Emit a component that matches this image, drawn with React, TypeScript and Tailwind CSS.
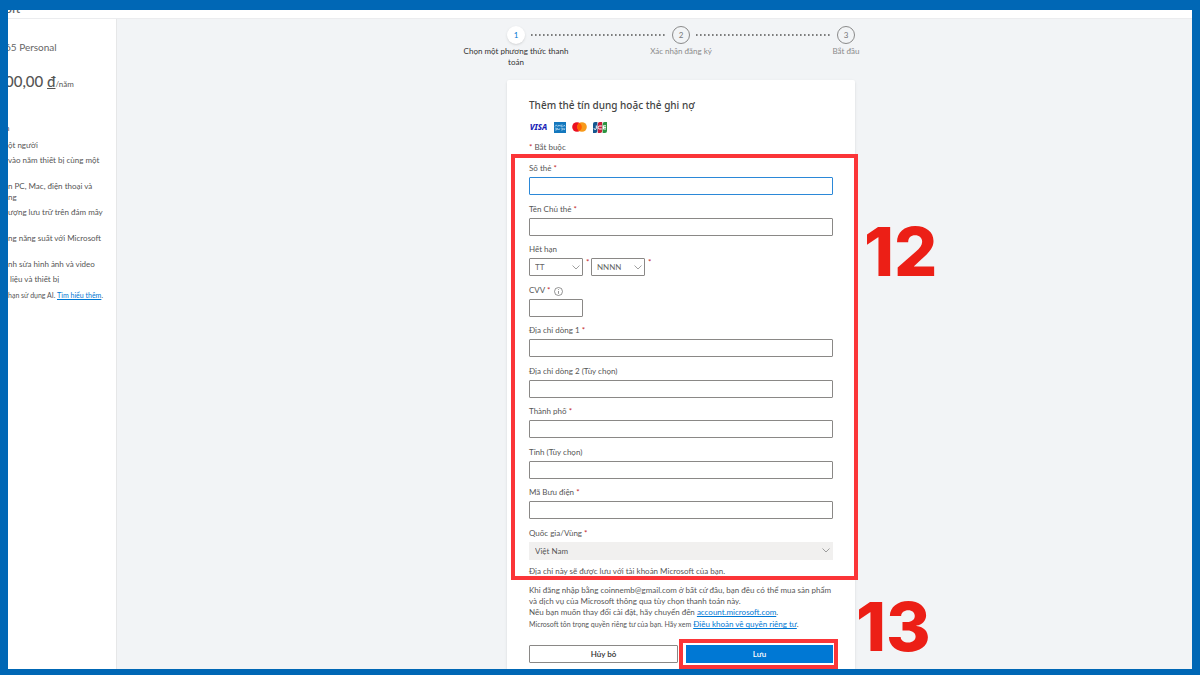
import type { ReactNode } from "react";

interface Step {
  number: number;
  label: string;
  active?: boolean;
}

const steps: Step[] = [
  { number: 1, label: "Chọn một phương thức thanh toán", active: true },
  { number: 2, label: "Xác nhận đăng ký" },
  { number: 3, label: "Bắt đầu" },
];

interface Benefit {
  lines: string[];
  className: string;
}

const benefits: Benefit[] = [
  { lines: ["ột người"], className: "h-[15px]" },
  { lines: ["vào năm thiết bị cùng một"], className: "h-[26px]" },
  { lines: ["n PC, Mac, điện thoại và", "ng"], className: "h-[26px]" },
  { lines: ["ượng lưu trữ trên đám mây"], className: "h-[26px]" },
  { lines: ["ng năng suất với Microsoft"], className: "h-[26px]" },
  { lines: ["nh sửa hình ảnh và video"], className: "h-[15px]" },
  { lines: ["liệu và thiết bị"], className: "h-[15px] pl-[2px]" },
];

function Required() {
  return <span className="text-[#c4262c]">*</span>;
}

function Chevron() {
  return (
    <svg viewBox="0 0 8 5" className="pointer-events-none col-start-1 row-start-1 mr-[3px] h-[5px] w-2 justify-self-end self-center" fill="none" stroke="#888" strokeWidth="0.8">
      <path d="M0.5 0.5 4 4 7.5 0.5" />
    </svg>
  );
}

function Connector() {
  return (
    <svg className="-mx-[43px] mt-2 h-[2px] w-[135px] shrink-0" aria-hidden="true">
      <line x1="0" y1="1" x2="100%" y2="1" stroke="#555" strokeWidth="1.5" strokeDasharray="1.6 2.4" />
    </svg>
  );
}

function Stepper() {
  return (
    <ol className="flex justify-center">
      {steps.map((step, i) => (
        <li key={step.number} className="flex">
          {i > 0 && <Connector />}
          <div className="flex w-[116px] flex-col items-center text-center">
            <span
              className={
                step.active
                  ? "flex size-[18px] items-center justify-center rounded-full bg-white text-[8px] text-[#0078d4] shadow"
                  : "flex size-[18px] items-center justify-center rounded-full border border-[#8a8a8a] text-[8px] text-[#777]"
              }
            >
              {step.number}
            </span>
            <span className={step.active ? "mt-[2px] leading-[11px] text-[#333]" : "mt-[2px] leading-[11px] text-[#8a8a8a]"}>
              {step.label}
            </span>
          </div>
        </li>
      ))}
    </ol>
  );
}

function CardLogos() {
  return (
    <div className="flex h-3 items-center gap-[6px]">
      <span className="w-[19px] text-center font-['Noto_Sans'] text-[8px] font-extrabold italic text-[#1a1fb8]">VISA</span>
      <svg viewBox="0 0 12 11" className="h-[11px] w-3" role="img" aria-label="American Express">
        <rect width="12" height="11" fill="#1478be" />
        <path d="M1 4.6 2.2 2.8 3.4 4.6M4.2 4.6V2.9L5.2 4 6.2 2.9V4.6M8.8 3H7.3V4.5H8.8M9.5 3 11 4.5M11 3 9.5 4.5M1 6.2H2.6V8H1M3.4 8V6.2L5 8 6 6.2M7 6.2H8.6V8H7M9.4 6.2 11 8M11 6.2 9.4 8" stroke="#cfe8f7" strokeWidth="0.6" fill="none" />
      </svg>
      <svg viewBox="0 0 15 10" className="h-[10px] w-[15px]" role="img" aria-label="Mastercard">
        <circle cx="5" cy="5" r="4.8" fill="#eb1020" />
        <circle cx="10" cy="5" r="4.8" fill="#f79a1b" />
        <path d="M7.5 0.9a4.8 4.8 0 0 1 0 8.2 4.8 4.8 0 0 1 0-8.2" fill="#ff5f00" />
      </svg>
      <svg viewBox="0 0 14 11" className="h-[11px] w-[14px]" role="img" aria-label="JCB">
        <path d="M2 0H4.4V9a2 2 0 0 1-2 2H0V2a2 2 0 0 1 2-2" fill="#14568f" />
        <path d="M6.8 0H9.2V9a2 2 0 0 1-2 2H4.8V2a2 2 0 0 1 2-2" fill="#c8203c" />
        <path d="M11.6 0H14V9a2 2 0 0 1-2 2H9.6V2a2 2 0 0 1 2-2" fill="#2c9440" />
        <path d="M3.3 3.5V6.3a1 1 0 0 1-2.3 0M8.8 4H6.6a1.4 1.4 0 0 0 0 3H8.8M10.2 3.8H13M10.2 5.4H13M10.2 7H13M10.4 3.8V7" stroke="#fff" strokeWidth="1" fill="none" />
      </svg>
    </div>
  );
}

interface FieldProps {
  id: string;
  label: string;
  required?: boolean;
  focused?: boolean;
}

function Field({ id, label, required, focused }: FieldProps) {
  return (
    <div>
      <label htmlFor={id} className="block h-[15px] leading-[13px]">
        {label} {required && <Required />}
      </label>
      <input
        id={id}
        type="text"
        className={
          focused
            ? "block h-[18px] w-full rounded-[1px] border border-[#2b88d8] bg-white px-1 outline-none"
            : "block h-[18px] w-full rounded-[1px] border border-[#8a8886] bg-white px-1 outline-none"
        }
      />
    </div>
  );
}

function ExpirySelect({ label, placeholder }: { label: string; placeholder: string }) {
  return (
    <div className="flex">
      <div className="grid">
        <select
          aria-label={label}
          className="col-start-1 row-start-1 h-[18px] w-[54px] appearance-none rounded-[1px] border border-[#8a8886] bg-white pl-[5px] text-[#666]"
        >
          <option>{placeholder}</option>
        </select>
        <Chevron />
      </div>
      <span className="w-2 pl-[3px] leading-[8px]">
        <Required />
      </span>
    </div>
  );
}

function Link({ href, children }: { href: string; children: ReactNode }) {
  return (
    <a href={href} className="text-[#0078d4] underline">
      {children}
    </a>
  );
}

function PaymentCard() {
  return (
    <form className="mt-3 w-[348px] rounded-[2px] bg-white px-[22px] pt-[18px] pb-4 shadow">
      <h1 className="font-['Noto_Sans'] text-[10px] leading-[14px] font-medium text-[#444]">Thêm thẻ tín dụng hoặc thẻ ghi nợ</h1>
      <div className="mt-[9px]">
        <CardLogos />
      </div>
      <p className="mt-2 leading-[13px]">
        <Required /> Bắt buộc
      </p>

      <div className="relative mt-2">
        <div className="flex min-h-[398px] flex-col justify-between">
          <Field id="card-number" label="Số thẻ" required focused />
          <Field id="card-holder" label="Tên Chủ thẻ" required />
          <fieldset>
            <legend className="h-[15px] leading-[13px]">Hết hạn</legend>
            <div className="flex">
              <ExpirySelect label="Tháng hết hạn" placeholder="TT" />
              <ExpirySelect label="Năm hết hạn" placeholder="NNNN" />
            </div>
          </fieldset>
          <div>
            <div className="flex h-[15px] gap-1 leading-[13px]">
              <label htmlFor="cvv">
                CVV <Required />
              </label>
              <svg viewBox="0 0 9 9" className="mt-[3px] size-[9px]" fill="none" stroke="#666" strokeWidth="0.7">
                <circle cx="4.5" cy="4.5" r="4" />
                <path d="M4.5 4V6.8M4.5 2.2V3" />
              </svg>
            </div>
            <input id="cvv" type="text" className="block h-[18px] w-[54px] rounded-[1px] border border-[#8a8886] bg-white px-1" />
          </div>
          <Field id="address-1" label="Địa chỉ dòng 1" required />
          <Field id="address-2" label="Địa chỉ dòng 2 (Tùy chọn)" />
          <Field id="city" label="Thành phố" required />
          <Field id="province" label="Tỉnh (Tùy chọn)" />
          <Field id="postcode" label="Mã Bưu điện" required />
          <div>
            <label htmlFor="country" className="block h-[15px] leading-[13px]">
              Quốc gia/Vùng <Required />
            </label>
            <div className="grid">
              <select id="country" className="col-start-1 row-start-1 h-[18px] w-full appearance-none bg-[#f1f0ef] pl-[6px]">
                <option>Việt Nam</option>
              </select>
              <Chevron />
            </div>
          </div>
        </div>
        <p className="mt-[6px] leading-[11px]">Địa chỉ này sẽ được lưu với tài khoản Microsoft của bạn.</p>
        <div className="pointer-events-none absolute -top-2 -right-[25px] -bottom-[3px] -left-[18px] border-4 border-[#fb3538]" />
        <span className="absolute top-[55px] left-[335px] font-[Inter] text-[68px] leading-[68px] font-extrabold text-[#ec1f16]">12</span>
      </div>

      <p className="mt-2 leading-[11px] whitespace-nowrap">
        Khi đăng nhập bằng coinnemb@gmail.com ở bất cứ đâu, bạn đều có thể mua sản phẩm
        <br />
        và dịch vụ của Microsoft thông qua tùy chọn thanh toán này.
        <br />
        Nếu bạn muốn thay đổi cài đặt, hãy chuyển đến <Link href="#account">account.microsoft.com</Link>.
      </p>
      <p className="leading-[12px]">
        <span className="text-[7px]">Microsoft tôn trọng quyền riêng tư của bạn. Hãy xem</span>{" "}
        <Link href="#privacy">Điều khoản về quyền riêng tư</Link>.
      </p>

      <div className="relative mt-[15px] flex gap-2">
        <button type="button" className="h-[18px] flex-1 rounded-[1px] border border-[#8a8886] bg-white font-semibold text-[#333]">
          Hủy bỏ
        </button>
        <div className="relative flex-1">
          <button type="submit" className="block h-[18px] w-full bg-[#0078d4] font-semibold text-white">
            Lưu
          </button>
          <div className="pointer-events-none absolute -top-[6px] -right-[5px] -bottom-[6px] -left-[7px] border-4 border-[#fb3538]" />
        </div>
        <span className="absolute -top-[53px] left-[327px] font-[Inter] text-[68px] leading-[68px] font-extrabold text-[#ec1f16]">13</span>
      </div>
    </form>
  );
}

function Sidebar() {
  return (
    <aside className="w-[109px] shrink-0 overflow-hidden border-r border-[#e6e7e8] bg-white whitespace-nowrap">
      <h2 className="mt-5 -ml-[3px] text-[10px] leading-[16px] text-[#666]">65 Personal</h2>
      <p className="mt-4 -ml-[3px] text-[15px] leading-[20px] font-medium text-[#555]">
        00,00 <span className="underline">đ</span>
        <span className="text-[8px] font-normal">/năm</span>
      </p>
      <p className="mt-[28px] -ml-[3px] leading-[12px]">n</p>
      <ul className="mt-[6px]">
        {benefits.map((benefit) => (
          <li key={benefit.lines[0]} className={benefit.className}>
            {benefit.lines.map((line) => (
              <span key={line} className="block leading-[11px]">
                {line}
              </span>
            ))}
          </li>
        ))}
      </ul>
      <p className="text-[7px] leading-[12px]">
        hạn sử dụng AI. <Link href="#more">Tìm hiểu thêm</Link>.
      </p>
    </aside>
  );
}

export default function App() {
  return (
    <div className="flex h-screen flex-col overflow-hidden border-x-8 border-t-[10px] border-b-[6px] border-[#0067b5] bg-[#f2f4f6] font-[Lato,'Noto_Sans',sans-serif] text-[8px] text-[#555]">
      <header className="flex h-[9px] shrink-0 items-end overflow-hidden border-b border-[#ebecee] bg-white">
        <span className="mb-[2px] -ml-[3px] text-[12px] leading-[14px] font-semibold text-[#666]">oft</span>
      </header>
      <div className="flex min-h-0 flex-1">
        <Sidebar />
        <main className="flex min-w-0 flex-1 flex-col items-center overflow-hidden pt-[7px] pl-[53px]">
          <Stepper />
          <PaymentCard />
        </main>
      </div>
    </div>
  );
}
